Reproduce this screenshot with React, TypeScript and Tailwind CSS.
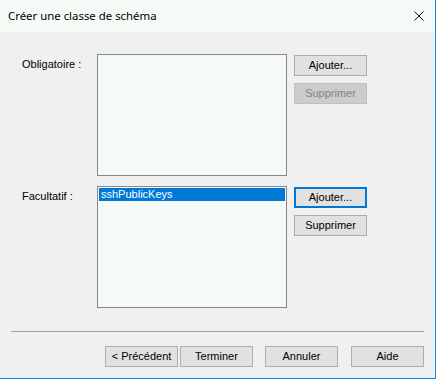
const font = { fontFamily: '"Liberation Sans", Arial, sans-serif' };

function WinButton({
    label,
    disabled,
    focused,
}: {
    label: string;
    disabled?: boolean;
    focused?: boolean;
}) {
    const base = 'w-[73px] h-[21px] flex items-center justify-center text-[11px] leading-none';
    if (disabled) {
        return (
            <div className={`${base} bg-[#cccccc] border border-[#bfbfbf] text-[#838383]`}>{label}</div>
        );
    }
    if (focused) {
        return (
            <div className={`${base} bg-[#e1e1e1] border-2 border-[#0078d7] text-black`}>{label}</div>
        );
    }
    return <div className={`${base} bg-[#e1e1e1] border border-[#adadad] text-black`}>{label}</div>;
}

function ListBox({ items, selected }: { items: string[]; selected?: number }) {
    return (
        <div className="w-[190px] h-[122px] bg-[#f6faf7] border border-[#828790] p-[1px]">
            {items.map((it, i) => (
                <div
                    key={it}
                    className={`h-[13px] pl-[2px] text-[11px] leading-[13px] ${
                        i === selected ? 'bg-[#0078d7] text-white' : 'text-black'
                    }`}
                >
                    {it}
                </div>
            ))}
        </div>
    );
}

export default function App() {
    return (
        <div className="w-[436px] h-[380px] bg-white" style={font}>
            <div className="w-[436px] h-[379px] bg-[#f0f0f0] border-r border-b border-[#1883d7] flex flex-col">
                {/* Title bar */}
                <div className="h-8 shrink-0 bg-[#f6faf7] flex items-center justify-between pl-2 pr-[11px]">
                    <span
                        className="text-[11.4px] text-black"
                        style={{ fontFamily: '"Noto Sans", "Open Sans", sans-serif' }}
                    >
                        Créer une classe de schéma
                    </span>
                    <svg width="10" height="10" viewBox="0 0 10 10" className="mt-[-1px]">
                        <path d="M0.5 0.5 L9.5 9.5 M9.5 0.5 L0.5 9.5" stroke="#111" strokeWidth="1" />
                    </svg>
                </div>

                {/* Obligatoire */}
                <div className="flex mt-[22px] pl-[22px]">
                    <div className="w-[75px] pt-[2px] text-[11px] text-black">Obligatoire :</div>
                    <ListBox items={[]} />
                    <div className="ml-[7px] mt-[1px] flex flex-col gap-[7px]">
                        <WinButton label="Ajouter..." />
                        <WinButton label="Supprimer" disabled />
                    </div>
                </div>

                {/* Facultatif */}
                <div className="flex mt-[10px] pl-[22px]">
                    <div className="w-[75px] pt-[2px] text-[11px] text-black">Facultatif :</div>
                    <ListBox items={['sshPublicKeys']} selected={0} />
                    <div className="ml-[7px] mt-[1px] flex flex-col gap-[7px]">
                        <WinButton label="Ajouter..." focused />
                        <WinButton label="Supprimer" />
                    </div>
                </div>

                {/* Separator */}
                <div className="ml-[11px] mt-[23px] w-[413px] h-px bg-[#a0a0a0]" />

                {/* Bottom buttons */}
                <div className="flex mt-[14px] pl-[105px]">
                    <WinButton label="< Précédent" />
                    <div className="ml-[2px]">
                        <WinButton label="Terminer" />
                    </div>
                    <div className="ml-[12px]">
                        <WinButton label="Annuler" />
                    </div>
                    <div className="ml-[13px]">
                        <WinButton label="Aide" />
                    </div>
                </div>
            </div>
        </div>
    );
}
